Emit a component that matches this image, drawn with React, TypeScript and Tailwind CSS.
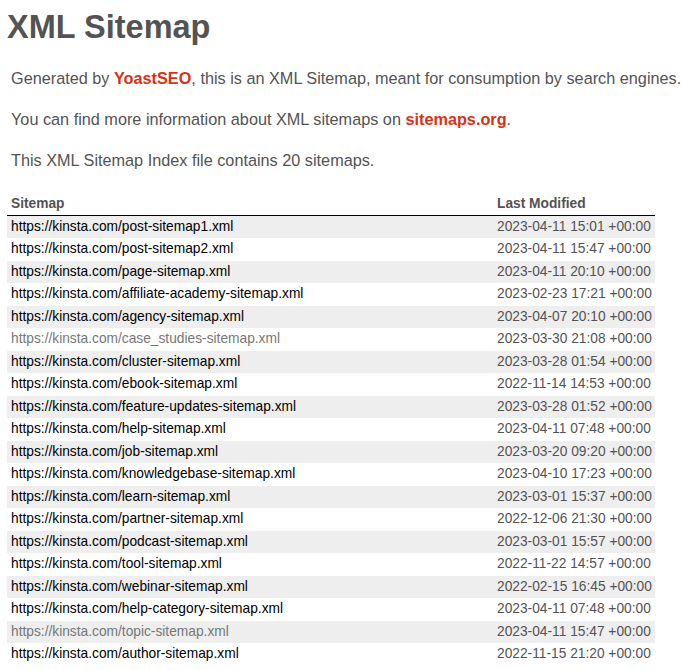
const sitemaps: { url: string; date: string; visited?: boolean }[] = [
  { url: "https://kinsta.com/post-sitemap1.xml", date: "2023-04-11 15:01 +00:00" },
  { url: "https://kinsta.com/post-sitemap2.xml", date: "2023-04-11 15:47 +00:00" },
  { url: "https://kinsta.com/page-sitemap.xml", date: "2023-04-11 20:10 +00:00" },
  { url: "https://kinsta.com/affiliate-academy-sitemap.xml", date: "2023-02-23 17:21 +00:00" },
  { url: "https://kinsta.com/agency-sitemap.xml", date: "2023-04-07 20:10 +00:00" },
  { url: "https://kinsta.com/case_studies-sitemap.xml", date: "2023-03-30 21:08 +00:00", visited: true },
  { url: "https://kinsta.com/cluster-sitemap.xml", date: "2023-03-28 01:54 +00:00" },
  { url: "https://kinsta.com/ebook-sitemap.xml", date: "2022-11-14 14:53 +00:00" },
  { url: "https://kinsta.com/feature-updates-sitemap.xml", date: "2023-03-28 01:52 +00:00" },
  { url: "https://kinsta.com/help-sitemap.xml", date: "2023-04-11 07:48 +00:00" },
  { url: "https://kinsta.com/job-sitemap.xml", date: "2023-03-20 09:20 +00:00" },
  { url: "https://kinsta.com/knowledgebase-sitemap.xml", date: "2023-04-10 17:23 +00:00" },
  { url: "https://kinsta.com/learn-sitemap.xml", date: "2023-03-01 15:37 +00:00" },
  { url: "https://kinsta.com/partner-sitemap.xml", date: "2022-12-06 21:30 +00:00" },
  { url: "https://kinsta.com/podcast-sitemap.xml", date: "2023-03-01 15:57 +00:00" },
  { url: "https://kinsta.com/tool-sitemap.xml", date: "2022-11-22 14:57 +00:00" },
  { url: "https://kinsta.com/webinar-sitemap.xml", date: "2022-02-15 16:45 +00:00" },
  { url: "https://kinsta.com/help-category-sitemap.xml", date: "2023-04-11 07:48 +00:00" },
  { url: "https://kinsta.com/topic-sitemap.xml", date: "2023-04-11 15:47 +00:00", visited: true },
  { url: "https://kinsta.com/author-sitemap.xml", date: "2022-11-15 21:20 +00:00" },
];

export default function App() {
  return (
    <div className="h-[670px] overflow-hidden bg-white pl-[7px] text-[#545353] font-['Liberation_Sans',Arial,sans-serif]">
      <h1 className="pt-[9px] text-[32.5px] font-bold leading-[1.15]">XML Sitemap</h1>

      <div className="mt-[23px] px-[4px] text-[16.25px] leading-[1.15] whitespace-nowrap">
        <p>
          Generated by <a className="font-bold text-[#da3114]">YoastSEO</a>, this is an XML Sitemap, meant for consumption by search engines.
        </p>
        <p className="mt-[22px]">
          You can find more information about XML sitemaps on <a className="font-bold text-[#da3114]">sitemaps.org</a>.
        </p>
        <p className="mt-[22.5px]">This XML Sitemap Index file contains 20 sitemaps.</p>
      </div>

      <table className="mt-[23.5px] w-[648px] table-fixed border-collapse text-[13.75px]">
        <colgroup>
          <col className="w-[486px]" />
          <col className="w-[162px]" />
        </colgroup>
        <thead>
          <tr className="h-[22.5px] border-b border-black">
            <th className="px-[4px] text-left font-bold">Sitemap</th>
            <th className="px-[4px] text-left font-bold">Last Modified</th>
          </tr>
        </thead>
        <tbody>
          {sitemaps.map((s, i) => (
            <tr key={s.url} className={`h-[22.5px] ${i % 2 === 0 ? "bg-[#eeeeee]" : ""}`}>
              <td className="px-[4px]">
                <a className={s.visited ? "text-[#777777]" : "text-black"}>{s.url}</a>
              </td>
              <td className="px-[4px] whitespace-nowrap">{s.date}</td>
            </tr>
          ))}
        </tbody>
      </table>
    </div>
  );
}
